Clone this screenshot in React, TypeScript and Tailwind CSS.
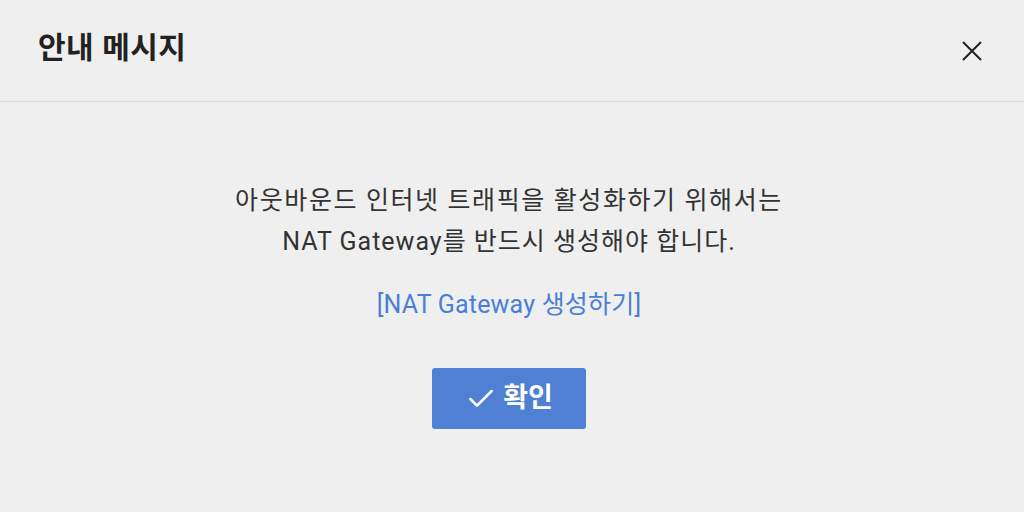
import { Check } from "lucide-react";

export default function App() {
  return (
    <div
      className="w-[1024px] h-[512px] bg-[#efefef] flex flex-col text-[#333333]"
      style={{ fontFamily: 'Roboto, "Noto Sans CJK KR", sans-serif' }}
    >
      {/* Header */}
      <div className="h-[102px] flex items-center justify-between pl-[38px] pr-[42px] border-b border-[#dcdcdc] shrink-0">
        <h1 className="text-[30px] font-bold tracking-[0.5px] text-[#222222] -mt-[6px]">안내 메시지</h1>
        <button className="w-[20px] h-[20px] flex items-center justify-center text-[#222222]">
          <svg width="20" height="20" viewBox="0 0 20 20" fill="none" stroke="currentColor" strokeWidth="2">
            <path d="M1 1 19 19M19 1 1 19" />
          </svg>
        </button>
      </div>

      {/* Body */}
      <div className="flex-1 flex flex-col items-center pt-[78px] pr-[6px]">
        <p className="text-[25px] leading-[41px] tracking-[1px] text-center text-[#333333]">
          <span className="tracking-[1.6px]">아웃바운드 인터넷 트래픽을 활성화하기 위해서는</span>
          <br />
          NAT Gateway를 반드시 생성해야 합니다.
        </p>
        <a href="#" className="mt-[28px] text-[25px] leading-[30px] tracking-[0.2px] text-[#4a7fd6]">
          [NAT Gateway 생성하기]
        </a>
        <button className="mt-[48px] w-[154px] h-[61px] bg-[#4f80d4] rounded-[3px] flex items-center justify-center gap-[6px] text-white">
          <Check className="w-[32px] h-[32px]" strokeWidth={1.9} />
          <span className="text-[27px] font-bold">확인</span>
        </button>
      </div>
    </div>
  );
}
